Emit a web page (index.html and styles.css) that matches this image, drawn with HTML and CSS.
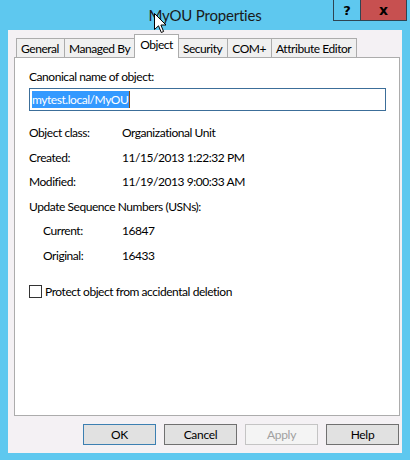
FILE: index.html
```html
<!DOCTYPE html>
<html lang="en">
<head>
    <meta charset="UTF-8">
    <title>MyOU Properties</title>
    <link rel="stylesheet" href="styles.css">
</head>
<body>
<div class="window">
    <div class="titlebar">
        <span class="title">MyOU Properties</span>
        <div class="caption-buttons">
            <span class="cap-help">?</span>
            <span class="cap-close">x</span>
        </div>
    </div>

    <div class="client">
        <div class="tabs">
            <span class="tab">General</span>
            <span class="tab">Managed By</span>
            <span class="tab active">Object</span>
            <span class="tab">Security</span>
            <span class="tab">COM+</span>
            <span class="tab">Attribute Editor</span>
        </div>

        <div class="panel">
            <div class="label">Canonical name of object:</div>
            <div class="textbox"><span class="selected">mytest.local/MyOU</span><span class="caret"></span></div>

            <div class="props">
                <span>Object class:</span><span>Organizational Unit</span>
                <span>Created:</span><span>11/15/2013 1:22:32 PM</span>
                <span>Modified:</span><span>11/19/2013 9:00:33 AM</span>
                <span class="wide">Update Sequence Numbers (USNs):</span>
                <span class="indent">Current:</span><span>16847</span>
                <span class="indent">Original:</span><span>16433</span>
            </div>

            <label class="check"><span class="box"></span>Protect object from accidental deletion</label>
        </div>

        <div class="buttons">
            <button class="btn default">OK</button>
            <button class="btn">Cancel</button>
            <button class="btn" disabled>Apply</button>
            <button class="btn">Help</button>
        </div>
    </div>

    <!-- mouse pointer sitting over the caption -->
    <svg class="pointer" width="13" height="21" viewBox="0 0 13 21">
        <path d="M0.5 0.5 L0.5 16.5 L4.5 12.8 L7.3 19.5 L9.6 18.5 L6.9 12 L12 12 Z" fill="#fff" stroke="#000" stroke-width="1"/>
    </svg>
</div>
</body>
</html>
```

FILE: styles.css
```css
body {
    margin: 0;
    background-color: #5ec8ef;
    font-family: Lato, "Noto Sans", sans-serif;
    font-size: 12px;
    letter-spacing: -0.45px;
    color: #000;
}
.window {
    position: relative;
    width: 410px;
    height: 460px;
    box-sizing: border-box;
    padding: 0 8px;
    background-color: #5ec8ef;
}
.titlebar {
    position: relative;
    height: 30px;
    display: flex;
    justify-content: center;
    align-items: center;
    margin: 0 -8px;
}
.title {
    font-size: 15px;
    letter-spacing: -0.2px;
    color: #1a1a1a;
    margin-top: -1px;
}
.caption-buttons {
    position: absolute;
    top: 0;
    right: 3px;
    display: flex;
    border: 1px solid #2e4452;
    border-top: none;
}
.cap-help, .cap-close {
    height: 20px;
    display: flex;
    align-items: center;
    justify-content: center;
    font-family: "DejaVu Sans", sans-serif;
    font-weight: bold;
    font-size: 13px;
    letter-spacing: 0;
}
.cap-help {
    width: 26px;
    border-right: 1px solid #2e4452;
}
.cap-close {
    width: 45px;
    background-color: #c75050;
    font-size: 14px;
}
.client {
    height: 423px;
    box-sizing: border-box;
    background-color: #f4f1f4;
    padding: 5px 2px 0 6px;
}
.tabs {
    display: flex;
    align-items: flex-end;
    height: 22px;
    padding-left: 2px;
}
.tab {
    height: 19px;
    box-sizing: border-box;
    padding: 0 5px 0 4px;
    border: 1px solid #acacac;
    border-bottom: none;
    margin-right: -1px;
    background-color: #f0f0f0;
    line-height: 19px;
    white-space: nowrap;
}
.tab.active {
    position: relative;
    z-index: 1;
    height: 24px;
    margin: 0 -1px -1px -1px;
    padding: 0 5px;
    background-color: #fff;
    line-height: 19px;
}
.panel {
    height: 359px;
    box-sizing: border-box;
    border: 1px solid #acacac;
    background-color: #fff;
    padding: 11px 13px 0 14px;
}
.label {
    line-height: 16px;
}
.textbox {
    margin-top: 3px;
    height: 23px;
    box-sizing: border-box;
    border: 1px solid #3c6e99;
    padding: 2px 2px;
    display: flex;
    align-items: center;
}
.selected {
    background-color: #3399ff;
    color: #fff;
    line-height: 17px;
    padding-right: 1px;
}
.caret {
    width: 1px;
    height: 17px;
    background-color: #8a4a10;
}
.props {
    display: grid;
    grid-template-columns: 93px 1fr;
    grid-auto-rows: 16px;
    row-gap: 8.6px;
    margin-top: 14px;
    line-height: 16px;
}
.props .wide {
    grid-column: 1 / 3;
}
.props .indent {
    padding-left: 14px;
}
.check {
    display: flex;
    align-items: center;
    margin-top: 20px;
    line-height: 16px;
}
.box {
    width: 13px;
    height: 13px;
    box-sizing: border-box;
    border: 1px solid #333;
    background-color: #fff;
    margin-right: 3px;
}
.buttons {
    display: flex;
    justify-content: flex-end;
    gap: 8px;
    margin-top: 8px;
    padding-right: 1px;
}
.btn {
    width: 73px;
    height: 21px;
    box-sizing: border-box;
    border: 1px solid #707070;
    background-color: #e1e1e1;
    font-family: Lato, "Noto Sans", sans-serif;
    font-size: 12px;
    letter-spacing: -0.3px;
    color: #000;
    padding: 0;
}
.btn.default {
    border-color: #3c7fb1;
}
.btn:disabled {
    border-color: #c4c4c4;
    background-color: #f4f4f4;
    color: #a0a0a0;
}
.pointer {
    position: absolute;
    left: 154px;
    top: 13px;
}
```
